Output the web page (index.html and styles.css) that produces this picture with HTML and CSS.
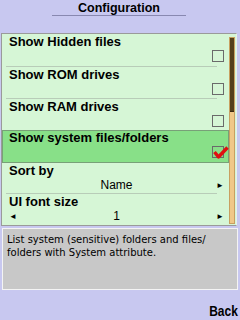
FILE: index.html
```html
<!DOCTYPE html>
<html lang="en">
<head>
    <meta charset="UTF-8">
    <title>Configuration</title>
    <link rel="stylesheet" href="styles.css">
</head>
<body>
    <div class="screen">
        <div class="title"><span>Configuration</span></div>

        <div class="panel">
            <div class="list">
                <div class="row r1">
                    <span class="label">Show Hidden files</span>
                    <span class="check"></span>
                </div>
                <div class="row r2">
                    <span class="label">Show ROM drives</span>
                    <span class="check"></span>
                </div>
                <div class="row r3">
                    <span class="label">Show RAM drives</span>
                    <span class="check"></span>
                </div>
                <div class="row selected">
                    <span class="label">Show system files/folders</span>
                    <span class="check">
                        <svg width="18" height="14" viewBox="0 0 18 14">
                            <path d="M2.5 6 L6.5 11 L15.5 1.5" fill="none" stroke="#e01010" stroke-width="3.4" stroke-linejoin="round"/>
                        </svg>
                    </span>
                </div>
                <div class="row r5">
                    <span class="label">Sort by</span>
                    <div class="value">
                        <span class="arrow"></span>
                        <span>Name</span>
                        <span class="arrow">&#9658;</span>
                    </div>
                </div>
                <div class="row last">
                    <span class="label">UI font size</span>
                    <div class="value">
                        <span class="arrow">&#9668;</span>
                        <span>1</span>
                        <span class="arrow">&#9658;</span>
                    </div>
                </div>
            </div>
            <div class="scrollbar"><div class="thumb"></div></div>
        </div>

        <div class="help">List system (sensitive) folders and files/ folders with System attribute.</div>

        <div class="softkeys"><span>Back</span></div>
    </div>
</body>
</html>
```

FILE: styles.css
```css
html,
body {
    margin: 0;
    padding: 0;
    background: #c8c8f0;
    font-family: "Liberation Sans", Arial, sans-serif;
}

.screen {
    width: 240px;
    height: 320px;
    display: flex;
    flex-direction: column;
}

.title {
    height: 33px;
    display: flex;
    justify-content: center;
    align-items: flex-start;
}

.title span {
    display: block;
    width: 134px;
    margin-left: -2px;
    padding-top: 1px;
    height: 14px;
    text-align: center;
    font-size: 12.5px;
    font-weight: bold;
    color: #000;
    border-bottom: 1px solid #8888b0;
}

.panel {
    margin: 0 3px 0 1px;
    height: 191px;
    background: #d6f6d6;
    border: 1px solid #9a9a9a;
    border-right-color: #e8f0e8;
    display: flex;
}

.list {
    flex: 1;
    display: flex;
    flex-direction: column;
}

.row {
    height: 31px;
    position: relative;
    display: flex;
    flex-direction: column;
    padding: 0 0 0 7px;
    box-sizing: border-box;
}

.r1 { height: 33px; }
.r2 { height: 32px; }
.r3 { height: 31px; }
.r5 { height: 31px; }

.row::after {
    content: "";
    position: absolute;
    left: 4px;
    width: 211px;
    bottom: 0;
    height: 1px;
    background: #b8ccb8;
}

.row.r3::after,
.row.last::after,
.row.selected::after {
    display: none;
}

.selected {
    height: 33px;
    background: #88e088;
    border: 1px solid #78a078;
    padding-left: 6px;
}

.label {
    font-size: 13px;
    font-weight: bold;
    line-height: 14px;
    padding-top: 1px;
    color: #000;
}

.selected .label {
    padding-top: 0;
}

.check {
    align-self: flex-end;
    width: 10px;
    height: 10px;
    margin: 1px 5px 0 0;
    border: 1px solid #6a6a6a;
    position: relative;
}

.selected .check {
    margin-right: 4px;
}

.check svg {
    position: absolute;
    left: -1px;
    top: -1px;
}

.value {
    display: flex;
    justify-content: space-between;
    align-items: center;
    padding: 1px 5px 0 0;
    font-size: 12px;
    line-height: 13px;
}

.arrow {
    width: 8px;
    font-size: 8px;
}

.scrollbar {
    width: 6px;
    margin: 3px 1px 1px 0;
    background: #f0c888;
    border: 1px solid #c8a060;
    box-sizing: border-box;
}

.thumb {
    height: 73px;
    background: #54401c;
    border-bottom: 1px solid #3a2810;
}

.help {
    margin: 2px 2px 0 2px;
    height: 62px;
    background: #c8c8c8;
    border: 1px solid #f4f4f4;
    padding: 4px 4px;
    box-sizing: border-box;
    font-family: "DejaVu Sans", sans-serif;
    font-size: 10px;
    line-height: 13px;
    color: #000;
}

.softkeys {
    flex: 1;
    display: flex;
    justify-content: flex-end;
    align-items: flex-end;
    padding: 0 2px 1px 0;
}

.softkeys span {
    font-size: 15px;
    font-weight: bold;
    transform: scaleX(0.8);
    transform-origin: right bottom;
}
```
